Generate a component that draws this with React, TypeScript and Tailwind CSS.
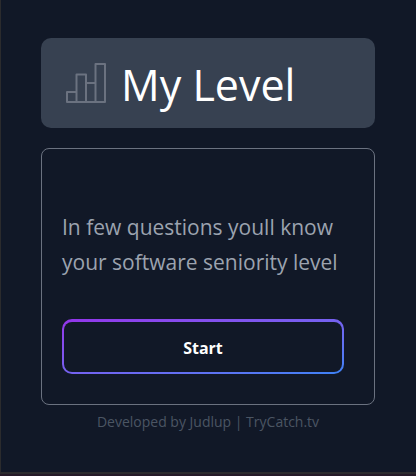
function ChartIcon() {
  return (
    <svg
      className="h-10 w-10 shrink-0 text-[#6b7280]"
      viewBox="0 0 40 40"
      fill="none"
      stroke="currentColor"
      strokeWidth="2"
      strokeLinejoin="round"
      aria-hidden="true"
    >
      <path d="M1 29h9.5v10H1zM10.5 11.5h9.5V39h-9.5zM20 20h9.5v19H20zM29.5 1H39v38h-9.5z" />
    </svg>
  );
}

export default function App() {
  return (
    <div className="flex min-h-screen flex-col border-b-2 border-[#251a28] font-['Open_Sans','Noto_Sans',sans-serif]">
      <main className="flex grow flex-col border-b-2 border-l border-[#2b2b2d] bg-[#111827] pt-[38px] pr-[41px] pl-10">
        <header className="flex h-[90px] items-center gap-[15px] rounded-[10px] bg-[#374151] px-[25px]">
          <ChartIcon />
          <h1 className="pt-1 text-[43px] leading-[60px] text-white">My Level</h1>
        </header>
        <section className="mt-5 rounded-lg border border-[#6b7280] px-5 pt-[61px] pb-[30px]">
          <p className="text-[21px] leading-[35px] text-[#9ca3af]">
            In few questions youll know your software seniority level
          </p>
          <div className="mt-[39px] mr-[10px] rounded-[10px] bg-linear-to-br from-[#9333ea] to-[#3b82f6] px-[2px] pt-[3px] pb-[2px]">
            <button
              type="button"
              className="h-[50px] w-full rounded-lg bg-[#111827] pt-0.5 text-base font-bold text-white"
            >
              Start
            </button>
          </div>
        </section>
        <footer className="mt-[5px] text-center text-sm leading-6 text-[#4b5563]">
          Developed by Judlup | TryCatch.tv
        </footer>
      </main>
    </div>
  );
}
